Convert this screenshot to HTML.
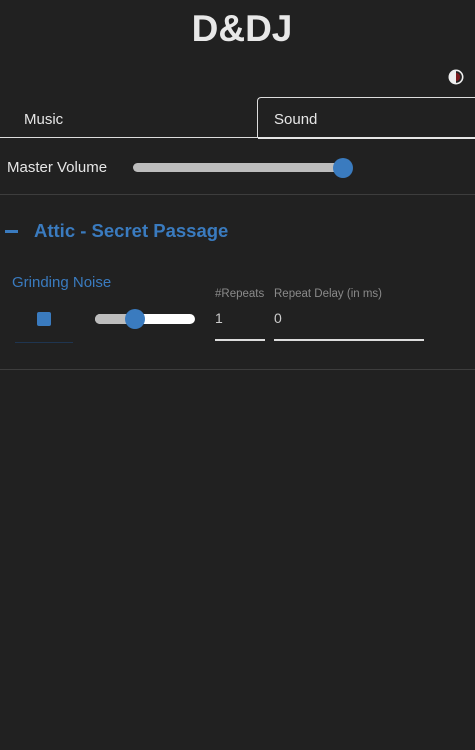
<!DOCTYPE html>
<html><head><meta charset="utf-8"><style>
html,body{margin:0;padding:0;background:#212121;width:475px;height:750px;overflow:hidden;font-family:"Segoe UI","Liberation Sans","DejaVu Sans",sans-serif;color:#e6e6e6}
.a{position:absolute;white-space:nowrap}
.blue{color:#3a7bbf}
</style></head><body>
<div class="a" style="left:0;width:484px;top:7px;text-align:center;font-size:37px;font-weight:bold;color:#e8e8e8;line-height:44px">D&amp;DJ</div>
<svg class="a" style="left:448px;top:69px" width="16" height="16" viewBox="0 0 16 16"><circle cx="8" cy="8" r="7.5" fill="#eee"/><path d="M8 3 A5 5 0 0 1 8 13 Z" fill="#7a1a1e"/><path d="M8 3 A5 5 0 0 1 8 13" fill="none" stroke="#222" stroke-width="1.8"/></svg>
<div class="a" style="left:257px;top:97px;width:218px;height:41px;border:1px solid #ddd;border-bottom:none;border-right:none;border-radius:4px 0 0 0;box-sizing:border-box"></div>
<div class="a" style="left:0;top:137px;width:258px;height:1px;background:#ddd"></div>
<div class="a" style="left:258px;top:137px;width:217px;height:2px;background:#e6e6e6"></div>
<div class="a" style="left:24px;top:110px;font-size:15px;line-height:20px">Music</div>
<div class="a" style="left:274px;top:110px;font-size:15px;line-height:20px">Sound</div>
<div class="a" style="left:7px;top:158px;font-size:15px;line-height:20px">Master Volume</div>
<div class="a" style="left:133px;top:163px;width:212px;height:9px;border-radius:5px;background:#bdbdbd"></div>
<div class="a" style="left:333px;top:158px;width:20px;height:20px;border-radius:50%;background:#3a7bbf"></div>
<div class="a" style="left:0;top:194px;width:475px;height:1px;background:#3d3d3d"></div>
<div class="a blue" style="left:5px;top:230px;width:13px;height:3px;background:#3a7bbf"></div>
<div class="a blue" style="left:34px;top:219px;font-size:18.5px;font-weight:600;line-height:24px">Attic - Secret Passage</div>
<div class="a blue" style="left:12px;top:273px;font-size:15px;line-height:20px">Grinding Noise</div>
<div class="a" style="left:37px;top:312px;width:14px;height:14px;border-radius:2px;background:#3a7bbf"></div>
<div class="a" style="left:15px;top:342px;width:58px;height:1px;background:#1f3550"></div>
<div class="a" style="left:95px;top:314px;width:100px;height:10px;border-radius:5px;background:#fff"></div>
<div class="a" style="left:95px;top:314px;width:40px;height:10px;border-radius:5px 0 0 5px;background:#bdbdbd"></div>
<div class="a" style="left:125px;top:309px;width:20px;height:20px;border-radius:50%;background:#3a7bbf"></div>
<div class="a" style="left:215px;top:286px;font-size:11.5px;color:#8a8a8a;line-height:16px">#Repeats</div>
<div class="a" style="left:274px;top:286px;font-size:11.5px;color:#8a8a8a;line-height:16px">Repeat Delay (in ms)</div>
<div class="a" style="left:215px;top:308px;font-size:14px;color:#ccc;line-height:20px">1</div>
<div class="a" style="left:274px;top:308px;font-size:14px;color:#ccc;line-height:20px">0</div>
<div class="a" style="left:215px;top:339px;width:50px;height:2px;background:#ddd"></div>
<div class="a" style="left:274px;top:339px;width:150px;height:2px;background:#ddd"></div>
<div class="a" style="left:0;top:369px;width:475px;height:1px;background:#3d3d3d"></div>
</body></html>
